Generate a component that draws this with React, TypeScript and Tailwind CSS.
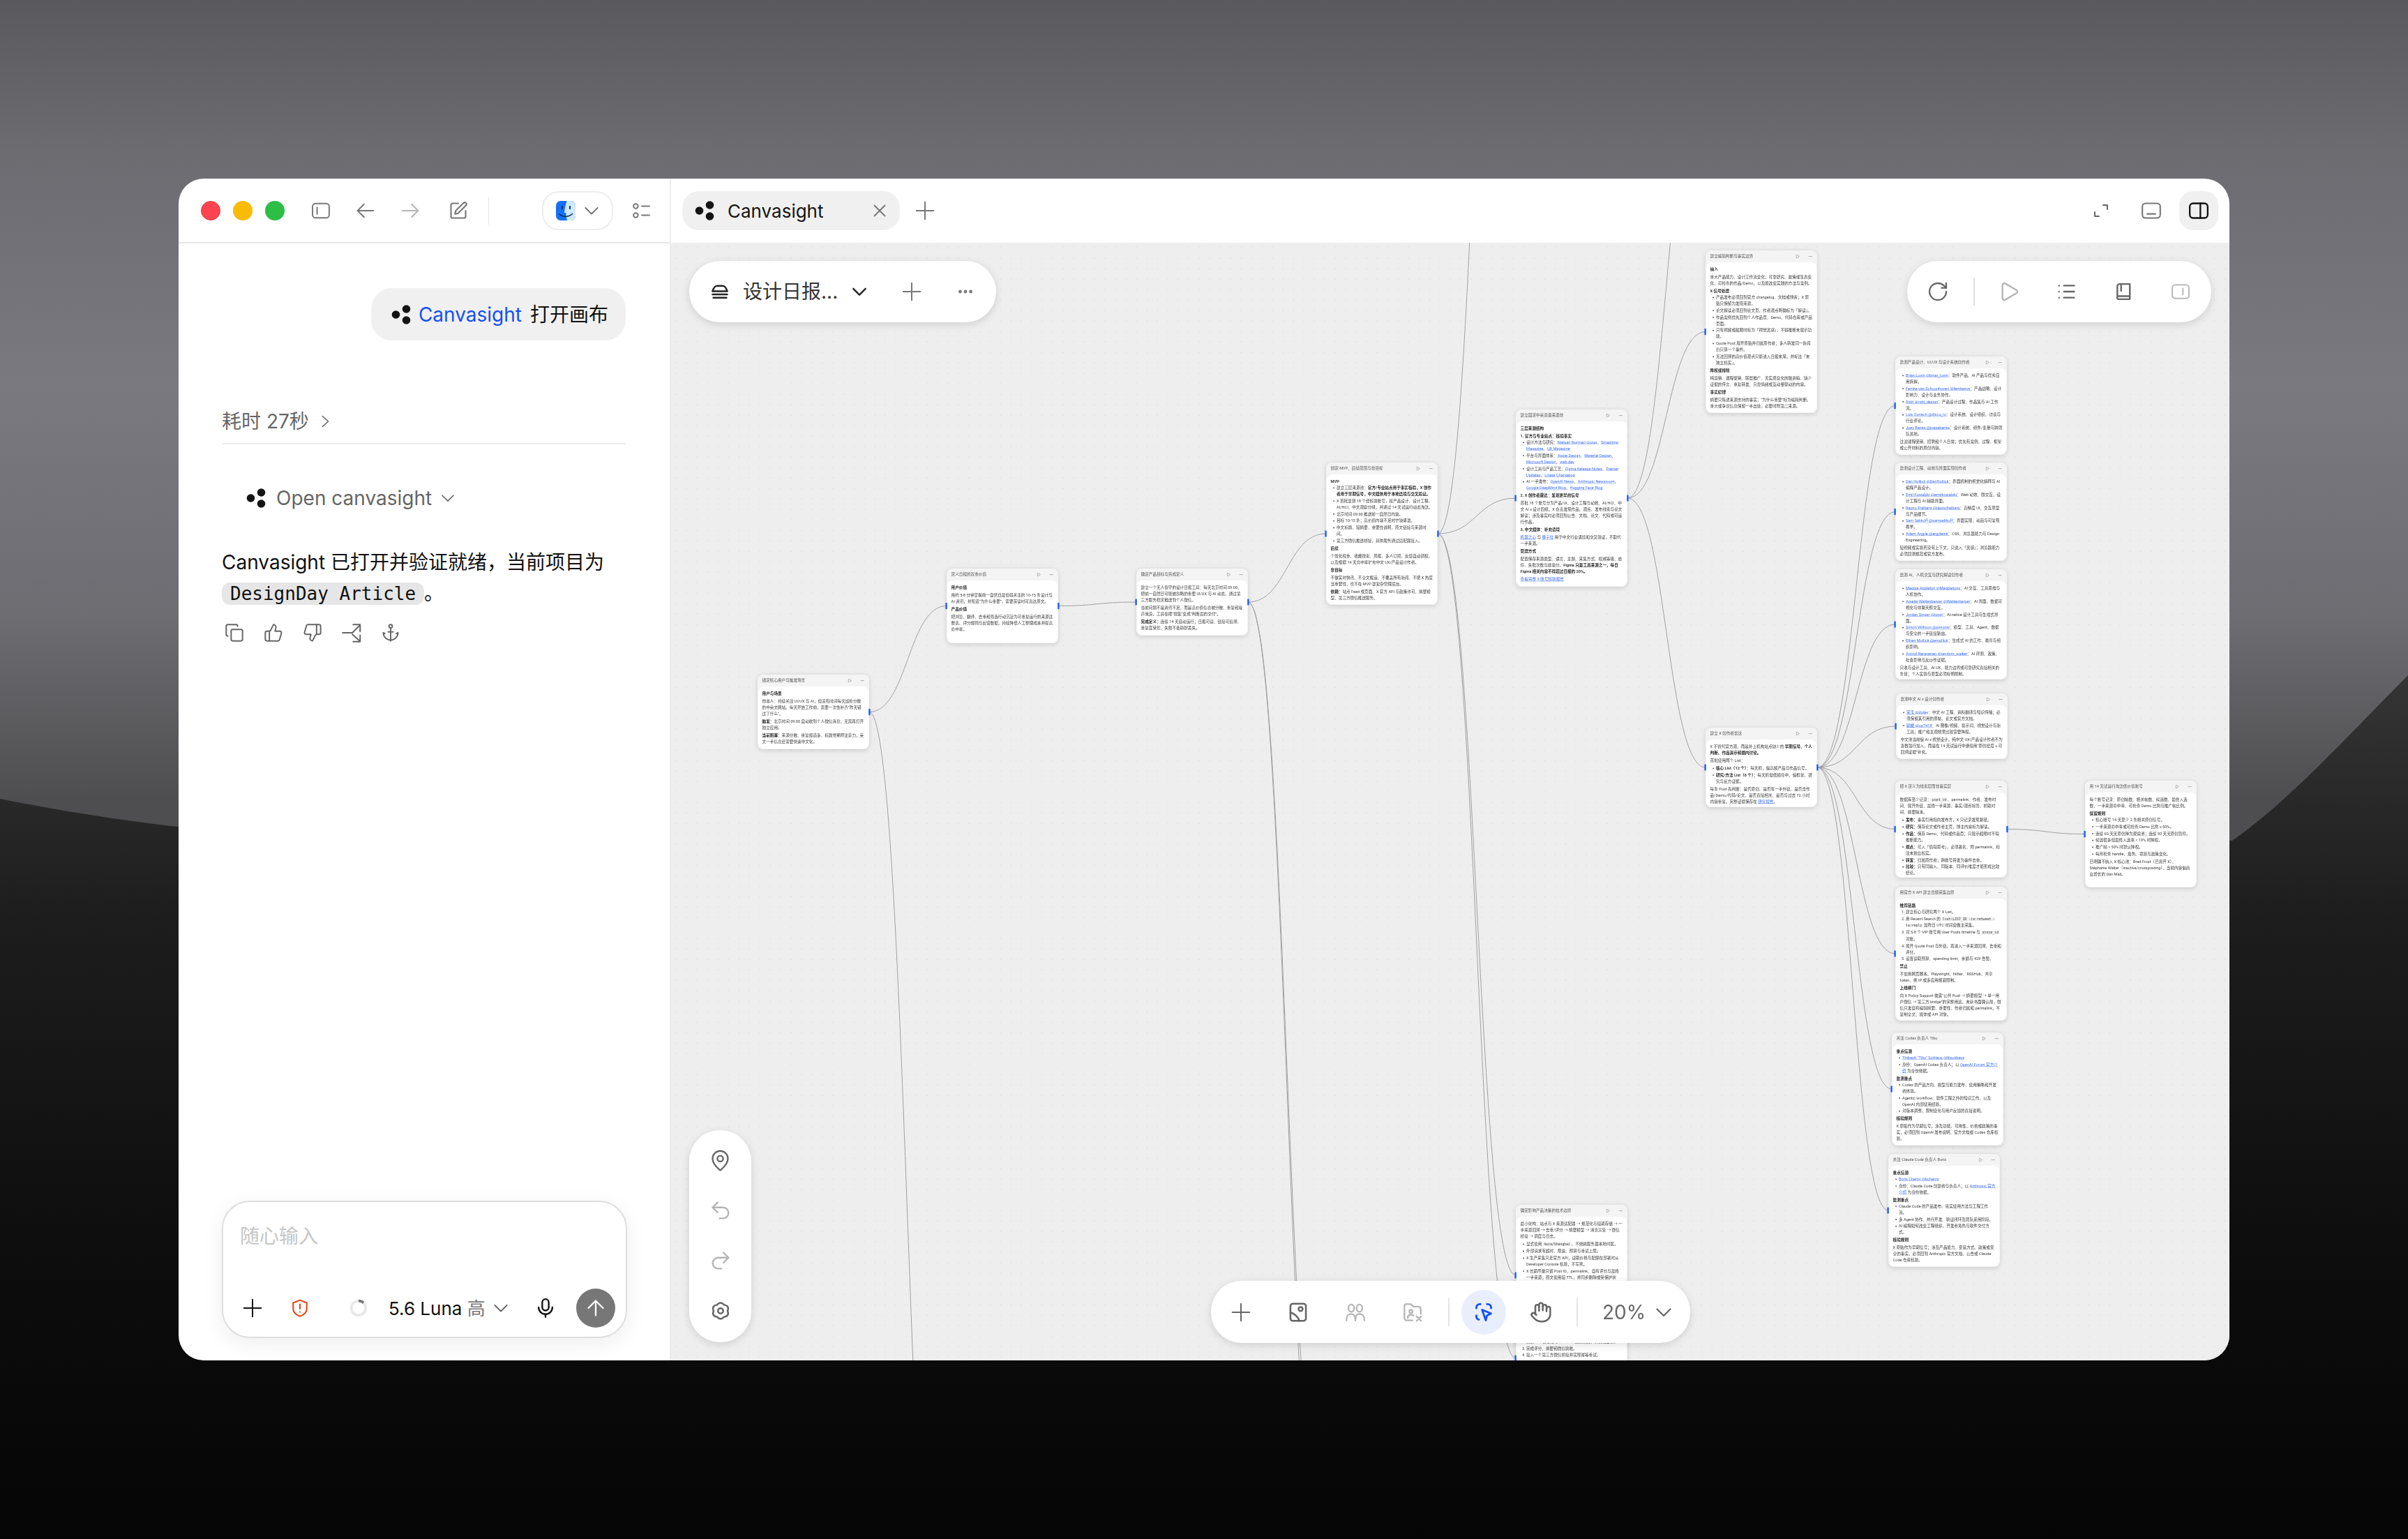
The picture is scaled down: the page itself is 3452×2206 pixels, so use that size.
import type { ReactNode } from 'react'
import {
  Anchor,
  ArrowUp,
  Copy,
  Ellipsis,
  Hand,
  MapPin,
  Play,
  Redo2,
  RotateCw,
  SquarePen,
  ThumbsDown,
  ThumbsUp,
  Undo2,
  X,
} from 'lucide-react'

// Screen position of the canvas, node coordinates below are in screen pixels
const ORIGIN_X = 962
const ORIGIN_Y = 348
const ZOOM = 5

function Dots({ className = '' }: { className?: string }) {
  return (
    <svg viewBox="0 0 28 28" className={className} fill="#141414">
      <circle cx="6.5" cy="14" r="5.8" />
      <circle cx="21.5" cy="6" r="5.8" />
      <circle cx="21.5" cy="22" r="5.8" />
    </svg>
  )
}

function FinderIcon() {
  return (
    <svg viewBox="0 0 28 28" className="h-[28px] w-[28px]">
      <rect width="28" height="28" rx="6.5" fill="#1670f5" />
      <path d="M15.5 0H21.5A6.5 6.5 0 0 1 28 6.5V21.5A6.5 6.5 0 0 1 21.5 28H16C15 24 14 20 14.500 17H12C12.500 11 14 5 15.500 0Z" fill="#cfe8fb" />
      <rect x="8" y="7" width="2" height="5" rx="1" fill="#0b2a55" />
      <rect x="19" y="7" width="2" height="5" rx="1" fill="#0b2a55" />
      <path d="M5 19C10 23.500 18 23.500 23.500 18.500" fill="none" stroke="#0b2a55" strokeWidth="1.500" strokeLinecap="round" />
    </svg>
  )
}

function Svg({ className = '', children, strokeWidth = 2 }: { className?: string; children: ReactNode; strokeWidth?: number }) {
  return (
    <svg
      viewBox="0 0 24 24"
      className={className}
      fill="none"
      stroke="currentColor"
      strokeWidth={strokeWidth}
      strokeLinecap="round"
      strokeLinejoin="round"
    >
      {children}
    </svg>
  )
}

// Fixed slot so an icon can be drawn larger than the space it takes in the row
function Box({ className = '', children }: { className?: string; children: ReactNode }) {
  return <div className={`flex h-[28px] w-[28px] shrink-0 items-center justify-center ${className}`}>{children}</div>
}

function PlusIcon({ className = '' }: { className?: string }) {
  return (
    <Svg className={`h-[28px] w-[28px] ${className}`} strokeWidth={1.700}>
      <path d="M12 1.500V22.500" />
      <path d="M1.500 12H22.500" />
    </Svg>
  )
}

function Chevron({ className = '', strokeWidth = 2 }: { className?: string; strokeWidth?: number }) {
  return (
    <Svg className={className} strokeWidth={strokeWidth}>
      <path d="M2.500 7.500L12 17L21.500 7.500" />
    </Svg>
  )
}

function Gear({ className }: { className?: string }) {
  return (
    <Svg className={className}>
      <path d="M8 5.100Q12 .5 16 5.100Q22.500 6 20 12Q22.500 18 16 18.900Q12 23.500 8 18.900Q1.500 18 4 12Q1.500 6 8 5.100Z" />
      <circle cx="12" cy="12" r="3" />
    </Svg>
  )
}

function Tray({ className }: { className?: string }) {
  return (
    <Svg className={className} strokeWidth={2.200}>
      <path d="M3 11.500C4.500 6.500 6 5 9 5H15C18 5 19.500 6.500 21 11.500Z" />
      <path d="M3 15.500H21" />
      <path d="M4 19.500H20" />
    </Svg>
  )
}

function SelectIcon({ className }: { className?: string }) {
  return (
    <Svg className={className} strokeWidth={2.400}>
      <path d="M3 7V6A4 4 0 0 1 7 2H8" />
      <path d="M16 2H17A4 4 0 0 1 21 6V7" />
      <path d="M3 16V18A4 4 0 0 0 6 21" />
      <path d="M10 9L21 13.500L16 16L14.500 22Z" />
    </Svg>
  )
}

type NodeData = {
  id: string
  x: number
  y: number
  h: number
  title: string
  body: ReactNode
}

const B = ({ children }: { children: ReactNode }) => <strong className="font-semibold text-[#222]">{children}</strong>
const H = ({ children }: { children: ReactNode }) => <div className="font-semibold text-[#222]">{children}</div>
const A = ({ children }: { children: ReactNode }) => <span className="text-[#3a6df0] underline">{children}</span>
const C = ({ children }: { children: ReactNode }) => (
  <code className="rounded-[8px] bg-[#f0f0f0] px-[8px] font-[family-name:'DejaVu_Sans_Mono',monospace] text-[24px]">{children}</code>
)
const Ul = ({ children }: { children: ReactNode }) => (
  <ul className="flex list-disc flex-col gap-[4px] pl-[42px]">{children}</ul>
)
const Ol = ({ children }: { children: ReactNode }) => (
  <ol className="flex list-decimal flex-col gap-[4px] pl-[42px]">{children}</ol>
)

const nodes: NodeData[] = [
  {
    id: 'user', x: 1086, y: 967, h: 107, title: '锁定核心用户与触发场景',
    body: (
      <>
        <H>用户与场景</H>
        <p>你本人：持续关注 UI/UX 与 AI，但没有时间每天巡检分散的中英文网站。每天开始工作前，需要一次性补齐“昨天错过了什么”。</p>
        <p><B>触发：</B>北京时间 09:00 自动收到个人微信消息，无需再打开独立应用。</p>
        <p><B>当前阻塞：</B>来源分散、重复报道多、标题党稀释注意力，英文一手信息还需要快速中文化。</p>
      </>
    ),
  },
  {
    id: 'value', x: 1357, y: 815, h: 107, title: '定义日报的双重价值',
    body: (
      <>
        <H>用户价值</H>
        <p>用约 5-8 分钟掌握前一自然日最值得关注的 10-15 条设计与 AI 资讯，并知道“为什么重要”，需要深读时可直达原文。</p>
        <H>产品价值</H>
        <p>把浏览、翻译、去重和筛选行动沉淀为可重复运行的来源注册表、评分规则与反馈数据，持续降低人工整理成本并提高命中率。</p>
      </>
    ),
  },
  {
    id: 'goal', x: 1629, y: 815, h: 96, title: '确定产品目标与完成定义',
    body: (
      <>
        <p>建立一个无人值守的设计日报工具：每天北京时间 09:00，把前一自然日可能被忽略的重要 UI/UX 与 AI 动态，通过第三方服务稳定推送到个人微信。</p>
        <p>当前问题不是资讯不足，而是高价值信息被分散、重复和噪声淹没。工具在把“搜集”变成“判断后的交付”。</p>
        <p><B>完成定义：</B>连续 14 天自动运行；日报可读、链接可追溯、重复度受控、失败不会静默丢失。</p>
      </>
    ),
  },
  {
    id: 'mvp', x: 1901, y: 663, h: 204, title: '划定 MVP、后续范围与非目标',
    body: (
      <>
        <H>MVP</H>
        <Ul>
          <li>建立三层来源池：<B>官方/专业站点用于事实核验，X 创作者用于早期信号，中文媒体用于本地语境与交叉验证。</B></li>
          <li>X 首批监测 18 个经核验账号，按产品设计、设计工程、AI/HCI、中文观察分组，并通过 14 天试运行动态淘汰。</li>
          <li>北京时间 09:00 推送前一自然日内容。</li>
          <li>目标 10-15 条；高价值内容不足时宁缺毋滥。</li>
          <li>中文标题、短摘要、重要性说明，原文链接与来源时间。</li>
          <li>第三方微信推送桥接，具体服务通过适配器接入。</li>
        </Ul>
        <H>后续</H>
        <p>个性化权重、收藏搜索、周报、多人订阅、反馈自动调权，以及根据 14 天命中率扩充中文 UX/产品设计作者。</p>
        <H>非目标</H>
        <p>不做实时快讯、不全文搬运、不覆盖所有新闻、不把 X 热度当重要性，也不在 MVP 建复杂管理后台。</p>
        <p><B>依赖：</B>站点 Feed 或页面、X 官方 API 与政策许可、摘要模型、第三方微信推送服务。</p>
      </>
    ),
  },
  {
    id: 'sources', x: 2173, y: 587, h: 254, title: '建立固定中英双语来源池',
    body: (
      <>
        <H>三层来源结构</H>
        <H>1. 官方与专业站点：核验事实</H>
        <Ul>
          <li>设计方法与研究：<A>Nielsen Norman Group</A>、<A>Smashing Magazine</A>、<A>UX Magazine</A></li>
          <li>平台与界面体系：<A>Apple Design</A>、<A>Material Design</A>、<A>Microsoft Design</A>、<A>web.dev</A></li>
          <li>设计工具与产品工艺：<A>Figma Release Notes</A>、<A>Framer Updates</A>、<A>Linear Changelog</A></li>
          <li>AI 一手发布：<A>OpenAI News</A>、<A>Anthropic Newsroom</A>、<A>Google DeepMind Blog</A>、<A>Hugging Face Blog</A></li>
        </Ul>
        <H>2. X 创作者雷达：发现更早的信号</H>
        <p>首批 18 个账号分为产品/UI、设计工程与动效、AI/HCI、中文 AI x 设计四组。X 负责发现作品、观点、发布线索与论文解读；涉及事实时必须回到公告、文档、论文、代码或可运行作品。</p>
        <H>3. 中文媒体：补充语境</H>
        <p><A>机器之心</A> 与 <A>量子位</A> 用于中文行业语境和交叉验证，不取代一手来源。</p>
        <H>管理方式</H>
        <p>配置保存来源类型、语言、主题、采集方式、权威等级、启停、失败次数与健康分。<B>Figma 只是工具来源之一，每日 Figma 相关内容不得超过日报的 20%。</B></p>
        <p><A>查看完整 X 账号核验报告</A></p>
      </>
    ),
  },
  {
    id: 'editorial', x: 2445, y: 359, h: 233, title: '建立编辑判断与事实边界',
    body: (
      <>
        <H>纳入</H>
        <p>重大产品能力、设计工作流变化、可靠研究、政策或生态变化、可检查的作品/Demo，以及能改变实践的方法与案例。</p>
        <H>X 信号处理</H>
        <Ul>
          <li>产品发布必须回到官方 changelog、文档或博客；X 原贴只保留为发现来源。</li>
          <li>论文解读必须回到论文页，作者观点明确标为「解读」。</li>
          <li>作品案例优先回到个人作品页、Demo、代码仓库或产品页面。</li>
          <li>只有视频或截图时标为「视觉灵感」，不得推断未展示功能。</li>
          <li>Quote Post 展开原贴并归属原作者；多人转发同一新闻仍只算一个事件。</li>
          <li>无法回溯的高价值观点只能进入日报末尾，并标注「未独立核实」。</li>
        </Ul>
        <H>降权或排除</H>
        <p>纯营销、课程促销、联盟推广、无实质变化的融资稿、缺少证据的传言、重复转发、只靠情绪或互动量驱动的内容。</p>
        <H>事实纪律</H>
        <p>摘要只陈述来源支持的事实；“为什么重要”标为编辑判断。重大或争议信息保留一手出处，必要时附第二来源。</p>
      </>
    ),
  },
  {
    id: 'radar', x: 2445, y: 1043, h: 114, title: '建立 X 创作者雷达',
    body: (
      <>
        <p>X 不替代官方源，而是补上机构站点缺少的 <B>早期信号、个人判断、作品演示和圈内讨论。</B></p>
        <p>首批使用两个 List：</p>
        <Ul>
          <li><B>核心 List（12 个）：</B>每天抓，偏高频产品与作品信号。</li>
          <li><B>研究/方法 List（6 个）：</B>每天抓但低频命中，偏框架、研究与反方证据。</li>
        </Ul>
        <p>每条 Post 先判断：是否原创、是否有一手外链、是否含作品/Demo/代码/论文、是否直接相关、是否与过去 72 小时内容重复。完整证据保存在 <A>研究报告</A>。</p>
      </>
    ),
  },
  {
    id: 'design', x: 2717, y: 511, h: 141, title: '监测产品设计、UI/UX 与设计系统创作者',
    body: (
      <>
        <Ul>
          <li><A>Brian Lovin @brian_lovin</A>：软件产品、AI 产品与优秀应用拆解。</li>
          <li><A>Femke van Schoonhoven @femkesvs</A>：产品战略、设计影响力、设计与业务协作。</li>
          <li><A>Ridd @ridd_design</A>：产品设计过程、作品集与 AI 工作流。</li>
          <li><A>Luis Ouriach @disco_lu</A>：设计系统、设计组织、访谈与行业评论。</li>
          <li><A>Joey Banks @joeyabanks</A>：设计系统、组件/变量与跨团队落地。</li>
        </Ul>
        <p>过滤课程促销、招聘和个人日常；优先有案例、过程、框架或公开材料的原创内容。</p>
      </>
    ),
  },
  {
    id: 'engineering', x: 2717, y: 663, h: 141, title: '监测设计工程、动效与界面实现创作者',
    body: (
      <>
        <Ul>
          <li><A>Dan Hollick @DanHollick</A>：界面机制的视觉化解释与 AI 编程产品设计。</li>
          <li><A>Emil Kowalski @emilkowalski</A>：Web 动效、微交互、设计工程与 AI 辅助界面。</li>
          <li><A>Rauno Freiberg @raunofreiberg</A>：高精度 UI、交互原型与产品细节。</li>
          <li><A>Sam Selikoff @samselikoff</A>：界面实现、动画与可复现教学。</li>
          <li><A>Adam Argyle @argyleink</A>：CSS、浏览器能力与 Design Engineering。</li>
        </Ul>
        <p>短视频或实验若没有上下文，只进入「灵感」；浏览器能力必须回测规范或官方发布。</p>
      </>
    ),
  },
  {
    id: 'hci', x: 2717, y: 816, h: 158, title: '监测 AI、人机交互与研究解读创作者',
    body: (
      <>
        <Ul>
          <li><A>Maggie Appleton @Mappletons</A>：AI 交互、工具思维与人机协作。</li>
          <li><A>Amelia Wattenberger @Wattenberger</A>：AI 界面、数据可视化与非聊天框交互。</li>
          <li><A>Jordan Singer @jsngr</A>：AI-native 设计工具与生成式界面。</li>
          <li><A>Simon Willison @simonw</A>：模型、工具、Agent、数据与安全的一手链接路由。</li>
          <li><A>Ethan Mollick @emollick</A>：生成式 AI 的工作、教育与组织影响。</li>
          <li><A>Arvind Narayanan @random_walker</A>：AI 评测、政策、社会影响与反炒作证据。</li>
        </Ul>
        <p>只收与设计工具、AI UX、能力边界或可靠研究直接相关的条目；个人实验与原型必须标明限制。</p>
      </>
    ),
  },
  {
    id: 'chinese', x: 2718, y: 994, h: 94, title: '监测中文 AI x 设计创作者',
    body: (
      <>
        <Ul>
          <li><A>宝玉 @dotey</A>：中文 AI 工程、资料翻译与知识传播；必须保留其引用的原帖、论文或官方文档。</li>
          <li><A>歸藏 @op7418</A>：AI 图像/视频、提示词、视觉设计与新工具；推广和主观效果比较需要降权。</li>
        </Ul>
        <p>中文池当前偏 AI x 视觉设计。纯中文 UX/产品设计作者不为凑数强行加入，而是在 14 天试运行中继续用“原创密度 + 可回溯证据”补充。</p>
      </>
    ),
  },
  {
    id: 'clue', x: 2717, y: 1119, h: 139, title: '把 X 定义为线索层而非事实层',
    body: (
      <>
        <p>数据库至少记录：<C>post_id</C>、permalink、作者、发布时间、展开外链、最终一手来源、事实/观点标签、抓取时间、摘要版本。</p>
        <Ul>
          <li><B>发布：</B>事实引用指向发布方，X 只记录发现路径。</li>
          <li><B>研究：</B>保存论文或作者主页，博主内容标为解读。</li>
          <li><B>作品：</B>保存 Demo、代码或作品页；只展示截图时不得推断能力。</li>
          <li><B>观点：</B>可入「值得思考」，必须署名、附 permalink、标注未独立核实。</li>
          <li><B>转发：</B>归属原作者；跨账号转发为事件去重。</li>
          <li><B>比较：</B>只有同输入、同版本、同评价维度才能形成比较结论。</li>
        </Ul>
      </>
    ),
  },
  {
    id: 'trial', x: 2989, y: 1119, h: 153, title: '用 14 天试运行淘汰低价值账号',
    body: (
      <>
        <p>每个账号记录：原创帖数、相关帖数、候选数、最终入选数、一手来源命中率、可检查 Demo 比例与推广帖比例。</p>
        <H>保留规则</H>
        <Ul>
          <li>核心账号 14 天至少 2 条相关原创信号。</li>
          <li>一手来源命中率或可检查 Demo 比例 ≥ 50%。</li>
          <li>连续 60 天无原创降为观察池；连续 90 天无原创暂停。</li>
          <li>候选很多但最终入选率 &lt; 10% 时降权。</li>
          <li>推广帖 &gt; 50% 时默认降权。</li>
          <li>每月检查 handle、角色、项目与政策变化。</li>
        </Ul>
        <p>已明确不纳入 X 核心池：Brad Frost（已离开 X）、Stéphanie Walter（inactive/crossposting）、当前内容偏商业增长的 Dan Mall。</p>
      </>
    ),
  },
  {
    id: 'api', x: 2717, y: 1271, h: 192, title: '用官方 X API 建立合规采集边界',
    body: (
      <>
        <H>推荐链路</H>
        <Ol>
          <li>建立核心与研究两个 X List。</li>
          <li>用 Recent Search 的 <C>list:LIST_ID -is:retweet -is:reply</C> 加昨日 UTC 时间窗做主采集。</li>
          <li>对 5-8 个 VIP 账号用 User Posts timeline 与 <C>since_id</C> 对账。</li>
          <li>展开 Quote Post 与外链，再进入一手来源回溯、去重和评分。</li>
          <li>设置读取预算、spending limit、余额与 429 告警。</li>
        </Ol>
        <H>禁止</H>
        <p>不使用网页脚本、Playwright、Nitter、RSSHub、共享 token、换 IP 或多应用规避限制。</p>
        <H>上线闸门</H>
        <p>向 X Policy Support 披露“公共 Post → 摘要模型 → 单一用户微信 → 第三方 bridge”的完整用途。未获书面确认前，微信只发自有编辑摘要、重要性、作者归属和 permalink，不复制全文、媒体或 API 对象。</p>
      </>
    ),
  },
  {
    id: 'tibo', x: 2712, y: 1480, h: 162, title: '关注 Codex 负责人 Tibo',
    body: (
      <>
        <H>重点信源</H>
        <Ul>
          <li><A>Thibault "Tibo" Sottiaux @thsottiaux</A></li>
          <li>身份：OpenAI Codex 负责人；以 <A>OpenAI Forum 官方介绍</A> 为身份依据。</li>
        </Ul>
        <H>监测重点</H>
        <Ul>
          <li>Codex 的产品方向、模型与能力发布、使用策略和开发者体验。</li>
          <li>Agentic workflow、软件工程之外的知识工作，以及 OpenAI 内部使用经验。</li>
          <li>对版本调整、限制变化与用户反馈的直接说明。</li>
        </Ul>
        <H>核验规则</H>
        <p>X 原贴作为早期信号；涉及功能、可用性、价格或政策的事实，必须回到 OpenAI 发布说明、官方文档或 Codex 仓库核验。</p>
      </>
    ),
  },
  {
    id: 'boris', x: 2707, y: 1654, h: 162, title: '关注 Claude Code 负责人 Boris',
    body: (
      <>
        <H>重点信源</H>
        <Ul>
          <li><A>Boris Cherny @bcherny</A></li>
          <li>身份：Claude Code 创建者与负责人；以 <A>Anthropic 官方介绍</A> 为身份依据。</li>
        </Ul>
        <H>监测重点</H>
        <Ul>
          <li>Claude Code 的产品发布、真实使用方法与工程工作流。</li>
          <li>多 Agent 协作、并行开发、验证闭环及团队采用阶段。</li>
          <li>AI 编程如何改变工程组织、开发者角色与软件交付方式。</li>
        </Ul>
        <H>核验规则</H>
        <p>X 原贴作为早期信号；涉及产品能力、安装方式、政策或安全的事实，必须回到 Anthropic 官方文档、公告或 Claude Code 仓库核验。</p>
      </>
    ),
  },
  {
    id: 'tech', x: 2173, y: 1727, h: 202, title: '确定影响产品决策的技术边界',
    body: (
      <>
        <p>最小架构：站点与 X 来源适配器 → 规范化与短期存储 → 一手来源回溯 → 去重/评分 → 摘要模型 → 消息渲染 → 微信桥接 → 调度与日志。</p>
        <Ul>
          <li>显式使用 <C>Asia/Shanghai</C>，不依赖服务器本地时区。</li>
          <li>外部请求有超时、限速、预算与重试上限。</li>
          <li>X 生产采集只走官方 API；读取价格与配额在部署时从 Developer Console 核验，不写死。</li>
          <li>X 长期尽量只留 Post ID、permalink、自有评分与最终一手来源；原文使用短 TTL，并同步删除或受保护状态。</li>
        </Ul>
      </>
    ),
  },
  {
    id: 'plan', x: 2173, y: 1877, h: 140, title: '按阶段验证与交付',
    body: (
      <>
        <H>首期路径</H>
        <Ol>
          <li>建立来源注册表与采集适配器。</li>
          <li>打通 X 个核心账号 + 1 个 AI 源的采集、清洗和去重。</li>
          <li>完成评分、摘要和微信验收。</li>
          <li>接入一个第三方微信桥接并实现幂等重试。</li>
        </Ol>
      </>
    ),
  },
]

const nodeById = Object.fromEntries(nodes.map(n => [n.id, n]))

// Edges that leave the window have a raw target point instead of a node id
const edges: { from: string; to?: string; tx?: number; ty?: number }[] = [
  { from: 'user', to: 'value' },
  { from: 'user', tx: 1357, ty: 2500 },
  { from: 'value', to: 'goal' },
  { from: 'goal', to: 'mvp' },
  { from: 'goal', tx: 1901, ty: 2200 },
  { from: 'goal', tx: 1901, ty: 2260 },
  { from: 'mvp', to: 'sources' },
  { from: 'mvp', tx: 2173, ty: -526 },
  { from: 'mvp', to: 'tech' },
  { from: 'mvp', to: 'plan' },
  { from: 'sources', to: 'editorial' },
  { from: 'sources', to: 'radar' },
  { from: 'sources', tx: 2445, ty: 100 },
  { from: 'radar', to: 'design' },
  { from: 'radar', to: 'engineering' },
  { from: 'radar', to: 'hci' },
  { from: 'radar', to: 'chinese' },
  { from: 'radar', to: 'clue' },
  { from: 'radar', to: 'api' },
  { from: 'radar', to: 'tibo' },
  { from: 'radar', to: 'boris' },
  { from: 'clue', to: 'trial' },
]

function edgePath(e: (typeof edges)[number]) {
  const s = nodeById[e.from]
  const t = e.to ? nodeById[e.to] : null
  const x1 = s.x + 160 - ORIGIN_X
  const y1 = s.y + s.h / 2 - ORIGIN_Y
  const x2 = (t ? t.x : e.tx!) - ORIGIN_X
  const y2 = (t ? t.y + t.h / 2 : e.ty!) - ORIGIN_Y
  const d = (x2 - x1) / 2
  return `M${x1} ${y1}C${x1 + d} ${y1} ${x2 - d} ${y2} ${x2} ${y2}`
}

function CanvasNode({ node }: { node: NodeData }) {
  const hasIn = edges.some(e => e.to === node.id)
  const hasOut = edges.some(e => e.from === node.id)
  return (
    <div
      className="absolute flex w-[800px] flex-col rounded-[40px] bg-[#f4f4f4] font-[family-name:Roboto,'Noto_Sans_CJK_SC',sans-serif] text-[28px] leading-[45px] text-[#3a3a3a] shadow-[0_8px_30px_rgba(0,0,0,0.14)]"
      style={{
        left: (node.x - ORIGIN_X) * ZOOM,
        top: (node.y - ORIGIN_Y) * ZOOM,
        height: node.h * ZOOM,
      }}
    >
      <div className="flex h-[85px] shrink-0 items-center pl-[33px] pr-[35px] text-[#555]">
        <span>{node.title}</span>
        <Play className="ml-auto h-[30px] w-[30px] text-[#888]" strokeWidth={2.500} />
        <Ellipsis className="ml-[60px] h-[30px] w-[30px] text-[#999]" strokeWidth={2.500} />
      </div>
      <div className="mx-[5px] mb-[5px] flex flex-1 flex-col gap-[10px] overflow-hidden rounded-[38px] bg-white px-[28px] pt-[28px] [&>div+ol]:mt-[-10px] [&>div+ul]:mt-[-10px]">
        {node.body}
      </div>
      {hasIn && <div className="absolute left-[-8px] top-1/2 h-[46px] w-[12px] -translate-y-1/2 rounded-[3px] bg-[#1f5cff]" />}
      {hasOut && <div className="absolute right-[-8px] top-1/2 h-[46px] w-[12px] -translate-y-1/2 rounded-[3px] bg-[#1f5cff]" />}
    </div>
  )
}

function Wallpaper() {
  return (
    <svg viewBox="0 0 3452 2206" className="absolute inset-0 h-full w-full">
      <defs>
        <linearGradient id="sky" x1="0" y1="0" x2="0" y2="1">
          <stop offset="0" stopColor="#5a595e" />
          <stop offset="0.1" stopColor="#6d6c71" />
          <stop offset="0.25" stopColor="#7a7980" />
          <stop offset="0.4" stopColor="#6e6d72" />
          <stop offset="0.52" stopColor="#4e4e50" />
        </linearGradient>
        <linearGradient id="hill" x1="0" y1="0" x2="0" y2="1">
          <stop offset="0" stopColor="#353536" />
          <stop offset="0.28" stopColor="#1d1d1d" />
          <stop offset="0.65" stopColor="#0e0e0e" />
          <stop offset="1" stopColor="#050505" />
        </linearGradient>
      </defs>
      <rect width="3452" height="2206" fill="url(#sky)" />
      <path d="M0 1145C100 1165 200 1180 300 1190L3200 1205C3280 1150 3370 1050 3452 968V2206H0Z" fill="url(#hill)" />
    </svg>
  )
}

export default function App() {
  return (
    <div className="relative h-[2206px] w-[3452px] overflow-hidden bg-black font-[family-name:Inter,'Noto_Sans_CJK_SC',sans-serif]">
      <Wallpaper />
      <div className="relative pl-[256px] pt-[256px]">
        <div className="flex h-[1694px] w-[2940px] overflow-hidden rounded-[36px] bg-white">
          {/* Chat side */}
          <aside className="flex w-[706px] shrink-0 flex-col border-r-2 border-[#ececec]">
            <div className="flex h-[93px] shrink-0 items-center border-b-2 border-[#e6e6e6] pl-[32px] text-[#777]">
              <div className="h-[28px] w-[28px] rounded-full border border-[#e2343f] bg-[#ff4350]" />
              <div className="ml-[18px] h-[28px] w-[28px] rounded-full bg-[#f8bb07]" />
              <div className="ml-[18px] h-[28px] w-[28px] rounded-full bg-[#2dbe46]" />
              <Svg className="ml-[39px] h-[30px] w-[26px]" strokeWidth={1.800}>
                <rect x="1" y="2.500" width="22" height="19" rx="4" />
                <path d="M7 7.500V16.500" />
              </Svg>
              <Svg className="ml-[38px] h-[26px] w-[26px]" strokeWidth={1.800}>
                <path d="M1.500 12H22.500" />
                <path d="M10 3.500L1.500 12L10 20.500" />
              </Svg>
              <Svg className="ml-[38px] h-[26px] w-[26px] text-[#b5b5b5]" strokeWidth={1.800}>
                <path d="M1.500 12H22.500" />
                <path d="M14 3.500L22.500 12L14 20.500" />
              </Svg>
              <SquarePen className="ml-[42px] h-[28px] w-[28px]" strokeWidth={1.800} />
              <div className="ml-[29px] h-[40px] w-px bg-[#e6e6e6]" />
              <div className="ml-[76px] flex h-[56px] w-[102px] items-center rounded-[24px] border-2 border-[#ededed] pl-[18px]">
                <FinderIcon />
                <Chevron className="ml-[12px] h-[22px] w-[22px] text-[#666]" />
              </div>
              <Svg className="ml-[27px] h-[26px] w-[26px]" strokeWidth={1.800}>
                <circle cx="5" cy="6" r="3" />
                <circle cx="5" cy="18" r="3" />
                <path d="M13 6H23" />
                <path d="M13 18H23" />
              </Svg>
            </div>

            <div className="flex min-h-0 flex-1 flex-col pb-[32px] pl-[62px] pr-[63px] text-[28px] text-[#111]">
              <div className="mt-[64px] flex h-[75px] items-center self-end rounded-[30px] bg-[#f0f0f0] pl-[29px] pr-[25px]">
                <Dots className="h-[28px] w-[28px]" />
                <span className="ml-[11px] text-[#1450f5]">Canvasight</span>
                <span className="ml-[12px]">打开画布</span>
              </div>

              <div className="mt-[96px] flex h-[53px] items-start border-b-2 border-[#ececec] leading-[40px] text-[#666]">
                <span>耗时 27秒</span>
                <Svg className="ml-[14px] mt-[11px] h-[18px] w-[18px]" strokeWidth={2.200}>
                  <path d="M7 2L18 12L7 22" />
                </Svg>
              </div>

              <div className="mt-[57px] flex h-[40px] items-center pl-[35px] text-[#666]">
                <Dots className="h-[28px] w-[28px]" />
                <span className="ml-[15px]">Open canvasight</span>
                <Chevron className="ml-[13px] h-[20px] w-[20px]" />
              </div>

              <div className="mt-[50px] leading-[44px]">
                <p>Canvasight 已打开并验证就绪，当前项目为</p>
                <p>
                  <code className="rounded-[12px] bg-[#e6e6e6] px-[12px] py-[1px] font-[family-name:'DejaVu_Sans_Mono',monospace] text-[26px]">
                    DesignDay Article
                  </code>
                  。
                </p>
              </div>

              <div className="ml-[4px] mt-[20px] flex gap-[28px] text-[#666]">
                <Copy className="h-[28px] w-[28px]" strokeWidth={1.700} />
                <ThumbsUp className="h-[28px] w-[28px]" strokeWidth={1.700} />
                <ThumbsDown className="h-[28px] w-[28px]" strokeWidth={1.700} />
                <Svg className="h-[28px] w-[28px]" strokeWidth={1.700}>
                  <path d="M1 12H13L22 3" />
                  <path d="M14 2H22.500V10.500" />
                  <path d="M13 14L22 22" />
                  <path d="M22.500 15V23H14" />
                </Svg>
                <Anchor className="h-[28px] w-[28px]" strokeWidth={1.700} />
              </div>

              <div className="mt-auto flex h-[197px] w-[581px] flex-col rounded-[40px] border-2 border-[#dedede] bg-white shadow-[0_8px_30px_rgba(0,0,0,0.07)]">
                <div className="pl-[24px] pt-[29px] leading-[40px] text-[#c6c6c6]">随心输入</div>
                <div className="mt-auto flex items-center pb-[13px] pl-[28px] pr-[15px]">
                  <PlusIcon />
                  <Svg className="ml-[41px] h-[28px] w-[26px] text-[#e2450f]" strokeWidth={1.900}>
                    <path d="M12 1.500L21 5V13C21 18 17 21 12 23C7 21 3 18 3 13V5Z" />
                    <path d="M12 7V13" />
                    <path d="M12 17V17.200" />
                  </Svg>
                  <svg viewBox="0 0 24 24" className="ml-[58px] h-[26px] w-[26px]" fill="none" strokeWidth="3.500">
                    <circle cx="12" cy="12" r="9.500" stroke="#e8e8e8" />
                    <path d="M12 2.500A9.500 9.500 0 0 1 18.500 5" stroke="#777" />
                  </svg>
                  <span className="ml-[30px] whitespace-nowrap text-[26px]">
                    5.6 Luna <span className="text-[#777]">高</span>
                  </span>
                  <Chevron className="ml-[11px] h-[22px] w-[22px] text-[#555]" strokeWidth={1.800} />
                  <Svg className="ml-[39px] h-[30px] w-[28px]" strokeWidth={2}>
                    <rect x="8" y="1" width="8" height="14" rx="4" />
                    <path d="M3.500 11A8.500 8.500 0 0 0 20.500 11" />
                    <path d="M12 19.500V23" />
                  </Svg>
                  <div className="ml-[30px] flex h-[56px] w-[56px] items-center justify-center rounded-full bg-[#777]">
                    <ArrowUp className="h-[36px] w-[36px] text-white" strokeWidth={1.500} />
                  </div>
                </div>
              </div>
            </div>
          </aside>

          {/* Canvas side */}
          <main className="flex min-w-0 flex-1 flex-col">
            <div className="flex h-[92px] shrink-0 items-center pl-[16px] pr-[16px] text-[#777]">
              <div className="flex h-[56px] w-[312px] items-center rounded-[24px] bg-[#f0f0f0] pl-[18px] text-[26px] text-[#141414]">
                <Dots className="h-[28px] w-[28px]" />
                <span className="ml-[19px]">Canvasight</span>
                <X className="ml-auto mr-[14px] h-[30px] w-[30px] text-[#777]" strokeWidth={1.500} />
              </div>
              <PlusIcon className="ml-[22px]" />
              <Svg className="ml-auto h-[24px] w-[24px] text-[#666]" strokeWidth={2}>
                <path d="M15 4H21V10" />
                <path d="M3 14V20H9" />
              </Svg>
              <Svg className="ml-[46px] h-[28px] w-[28px]" strokeWidth={1.800}>
                <rect x="1" y="3" width="22" height="18" rx="4" />
                <path d="M7 16H17" />
              </Svg>
              <div className="ml-[26px] flex h-[56px] w-[56px] items-center justify-center rounded-[20px] bg-[#f0f0f0] text-[#111]">
                <Svg className="h-[28px] w-[28px]" strokeWidth={2}>
                  <rect x="1" y="3" width="22" height="18" rx="4" />
                  <path d="M14 3V21" />
                </Svg>
              </div>
            </div>

            <div className="relative min-h-0 flex-1 overflow-hidden bg-[#eeeeee] bg-[radial-gradient(#e3e3e3_1px,transparent_1px)] bg-[length:15px_15px]">
              <svg className="absolute inset-0 h-full w-full" fill="none" stroke="#a0a0a0" strokeWidth="1">
                {edges.map((e, i) => (
                  <path key={i} d={edgePath(e)} />
                ))}
              </svg>

              {/* Nodes are laid out at 100% and zoomed out like the real canvas */}
              <div className="absolute left-0 top-0 origin-top-left scale-[0.2]">
                {nodes.map(n => (
                  <CanvasNode key={n.id} node={n} />
                ))}
              </div>

              {/* Project switcher */}
              <div className="absolute left-[26px] top-[26px] flex h-[88px] w-[440px] items-center rounded-[44px] bg-white pl-[30px] text-[28px] text-[#333] shadow-[0_3px_12px_rgba(0,0,0,0.13)]">
                <Tray className="h-[28px] w-[28px] text-[#222]" />
                <span className="ml-[19px] w-[132px] whitespace-nowrap">设计日报...</span>
                <Chevron className="ml-[24px] h-[22px] w-[22px] text-[#222]" strokeWidth={2.600} />
                <PlusIcon className="ml-[50px] text-[#777]" />
                <Ellipsis className="ml-[50px] h-[26px] w-[26px] text-[#777]" strokeWidth={2.400} />
              </div>

              {/* Preview actions */}
              <div className="absolute right-[26px] top-[26px] flex h-[88px] w-[436px] items-center rounded-[44px] bg-white pl-[30px] text-[#666] shadow-[0_3px_12px_rgba(0,0,0,0.13)]">
                <Box>
                  <RotateCw className="h-[32px] w-[32px] shrink-0" strokeWidth={1.700} />
                </Box>
                <div className="ml-[37px] h-[40px] w-[2px] bg-[#e0e0e0]" />
                <Box className="ml-[35px]">
                  <Play className="h-[32px] w-[32px] shrink-0 text-[#b5b5b5]" strokeWidth={1.800} />
                </Box>
                <Svg className="ml-[55px] h-[26px] w-[26px]" strokeWidth={2.200}>
                  <path d="M9 4H22.500" />
                  <path d="M9 12H22.500" />
                  <path d="M9 20H22.500" />
                  <path d="M2.500 4V4.100" />
                  <path d="M2.500 12V12.100" />
                  <path d="M2.500 20V20.100" />
                </Svg>
                <Svg className="ml-[56px] h-[28px] w-[26px]" strokeWidth={2.200}>
                  <path d="M4 19V5A3 3 0 0 1 7 2H20.500V22H6A2 2 0 0 1 4 19ZM4 18H20.500" />
                  <path d="M9 2V11" />
                </Svg>
                <Svg className="ml-[56px] h-[28px] w-[26px] text-[#bbb]" strokeWidth={2}>
                  <rect x="1" y="3" width="22" height="18" rx="4" />
                  <path d="M15 8V16" />
                </Svg>
              </div>

              {/* History tools */}
              <div className="absolute bottom-[26px] left-[26px] flex h-[304px] w-[89px] flex-col items-center gap-[44px] rounded-[44px] bg-white pt-[29px] text-[#666] shadow-[0_3px_12px_rgba(0,0,0,0.13)]">
                <Box>
                  <MapPin className="h-[33px] w-[33px] shrink-0" strokeWidth={1.700} />
                </Box>
                <Box>
                  <Undo2 className="h-[34px] w-[34px] shrink-0 text-[#b5b5b5]" strokeWidth={1.700} />
                </Box>
                <Box>
                  <Redo2 className="h-[34px] w-[34px] shrink-0 text-[#b5b5b5]" strokeWidth={1.700} />
                </Box>
                <Box>
                  <Gear className="h-[30px] w-[30px] shrink-0" />
                </Box>
              </div>

              {/* Canvas tools */}
              <div className="absolute bottom-[25px] left-[774px] flex h-[89px] w-[687px] items-center rounded-[44px] bg-white pl-[29px] text-[#666] shadow-[0_3px_12px_rgba(0,0,0,0.13)]">
                <PlusIcon />
                <Svg className="ml-[54px] h-[28px] w-[28px]" strokeWidth={2.200}>
                  <rect x="2.500" y="1.500" width="19" height="21" rx="3" />
                  <circle cx="15" cy="8" r="2.500" />
                  <path d="M2.500 12.500C7 13 12 18 13.500 22.500" />
                </Svg>
                <Svg className="ml-[54px] h-[28px] w-[28px] text-[#b5b5b5]" strokeWidth={2}>
                  <ellipse cx="7" cy="7" rx="3.500" ry="4.500" />
                  <ellipse cx="17" cy="7" rx="3.500" ry="4.500" />
                  <path d="M1 22C1 16 3 14 7 14C11 14 12 17 12 22" />
                  <path d="M12 22C12 17 13 14 17 14C21 14 23 16 23 22" />
                </Svg>
                <Svg className="ml-[54px] h-[28px] w-[28px] text-[#b5b5b5]" strokeWidth={2}>
                  <path d="M12 22H5A3 3 0 0 1 2 19V4A2 2 0 0 1 4 2H10L13 5H19A3 3 0 0 1 22 8V14" />
                  <circle cx="10" cy="11" r="2" />
                  <path d="M6 19C6 16 8 15 10 15C11 15 12 15.500 13 16" />
                  <path d="M17 17L22.500 22.500M22.500 17L17 22.500" />
                </Svg>
                <div className="ml-[37px] h-[40px] w-[2px] bg-[#e4e4e4]" />
                <div className="ml-[17px] flex h-[64px] w-[64px] items-center justify-center rounded-[32px] bg-[#e8eefb] text-[#1450f5]">
                  <SelectIcon className="h-[28px] w-[28px]" />
                </div>
                <Box className="ml-[36px]">
                  <Hand className="h-[32px] w-[32px] shrink-0" strokeWidth={1.900} />
                </Box>
                <div className="ml-[37px] h-[40px] w-[2px] bg-[#e4e4e4]" />
                <span className="ml-[35px] text-[28px]">20%</span>
                <Chevron className="ml-[14px] h-[24px] w-[24px]" strokeWidth={2.200} />
              </div>
            </div>
          </main>
        </div>
      </div>
    </div>
  )
}
